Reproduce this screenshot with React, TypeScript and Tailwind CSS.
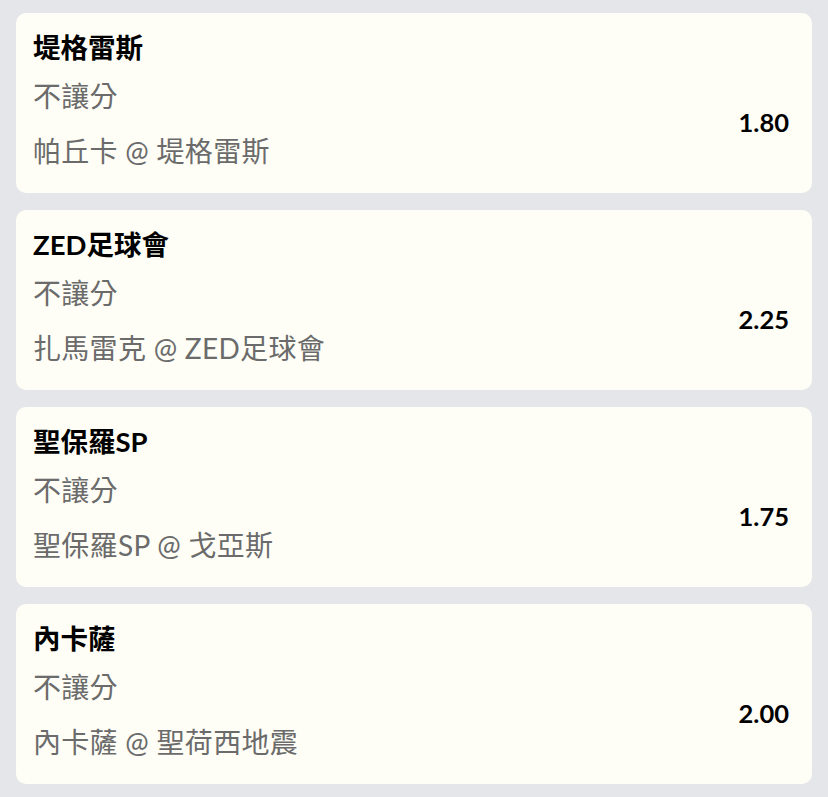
const bets = [
  { team: '堤格雷斯', market: '不讓分', match: '帕丘卡 @ 堤格雷斯', odds: '1.80' },
  { team: 'ZED足球會', market: '不讓分', match: '扎馬雷克 @ ZED足球會', odds: '2.25' },
  { team: '聖保羅SP', market: '不讓分', match: '聖保羅SP @ 戈亞斯', odds: '1.75' },
  { team: '內卡薩', market: '不讓分', match: '內卡薩 @ 聖荷西地震', odds: '2.00' },
];

export default function App() {
  return (
    <div className="min-h-screen w-full bg-[#e5e6e9] px-4 pt-[13px] pb-4 font-['Lato','Noto_Sans_CJK_TC',sans-serif]">
      <div className="flex flex-col gap-[17px]">
        {bets.map((bet) => (
          <div
            key={bet.team}
            className="h-[180px] rounded-[10px] bg-[#fefef6] pl-[17px] pr-[23px] pt-[17px]"
          >
            <div className="text-[27.5px] font-bold leading-9 text-black">{bet.team}</div>
            <div className="mt-3 flex items-center justify-between">
              <div className="flex flex-col gap-[19px] text-[28px] leading-9 tracking-[0.3px] text-[#6b6b6b]">
                <div>{bet.market}</div>
                <div>{bet.match}</div>
              </div>
              <div className="-mt-1 text-[25.5px] font-bold leading-9 text-black">{bet.odds}</div>
            </div>
          </div>
        ))}
      </div>
    </div>
  );
}
